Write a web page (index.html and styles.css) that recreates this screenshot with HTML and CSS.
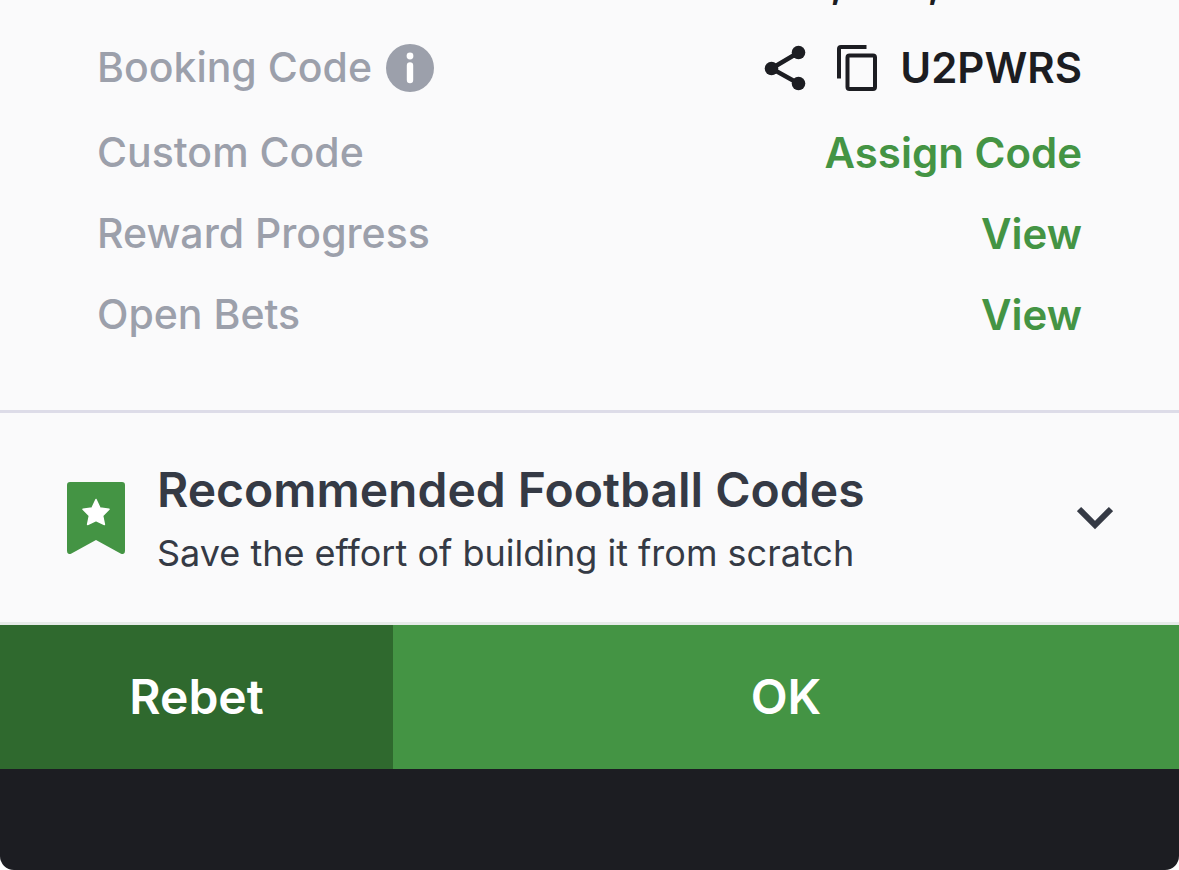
FILE: index.html
```html
<!DOCTYPE html>
<html lang="en">
<head>
    <meta charset="UTF-8">
    <meta name="viewport" content="width=device-width, initial-scale=1.0">
    <title>Booking Code</title>
    <link rel="stylesheet" href="styles.css">
</head>
<body>
    <div class="sheet">
        <main class="content">
            <div class="amount"><span>,</span><span>,</span></div>
            <dl class="details">
                <div class="row booking">
                    <dt>
                        Booking Code
                        <button class="icon-button" type="button" aria-label="About booking codes">
                            <svg width="48" height="48" viewBox="0 0 48 48">
                                <circle cx="24" cy="24" r="24" fill="#9ca0ab"/>
                                <circle cx="24" cy="12" r="3.4" fill="#fff"/>
                                <path d="M24 21.5V36" stroke="#fff" stroke-width="6.4" stroke-linecap="round"/>
                            </svg>
                        </button>
                    </dt>
                    <dd>
                        <button class="icon-button" type="button" aria-label="Share">
                            <svg width="42" height="48" viewBox="0 0 42 48" fill="#1c1d22">
                                <path d="M34.5 8.5 7.5 24.5 34.5 39.5" fill="none" stroke="#1c1d22" stroke-width="4.5"/>
                                <circle cx="34.5" cy="8.5" r="6.8"/>
                                <circle cx="7.5" cy="24.5" r="6.8"/>
                                <circle cx="34.5" cy="39.5" r="6.8"/>
                            </svg>
                        </button>
                        <button class="icon-button copy" type="button" aria-label="Copy code">
                            <svg width="42" height="48" viewBox="0 0 42 48" fill="none" stroke="#1c1d22" stroke-width="4">
                                <path d="M3 34.5V5a2 2 0 0 1 2-2H30.5"/>
                                <rect x="11.5" y="11.5" width="27.5" height="33.5" rx="2"/>
                            </svg>
                        </button>
                        <span>U2PWRS</span>
                    </dd>
                </div>
                <div class="row">
                    <dt>Custom Code</dt>
                    <dd><a href="#">Assign Code</a></dd>
                </div>
                <div class="row">
                    <dt>Reward Progress</dt>
                    <dd><a href="#">View</a></dd>
                </div>
                <div class="row">
                    <dt>Open Bets</dt>
                    <dd><a href="#">View</a></dd>
                </div>
            </dl>

            <button class="recommended" type="button" aria-expanded="false">
                <svg class="bookmark" width="58" height="72" viewBox="0 0 58 72">
                    <path d="M3 0H55a3 3 0 0 1 3 3V69q0 4-4 2.7L29 58 4 71.7Q0 73 0 69V3a3 3 0 0 1 3-3Z" fill="#449444"/>
                    <path d="M29 17.5 33 26 42 27.3 35.6 33.7 37.4 42.5 29 38.5 20.6 42.5 22.4 33.7 16 27.3 25 26Z" fill="#fff" stroke="#fff" stroke-width="1.5" stroke-linejoin="round"/>
                </svg>
                <span class="recommended-text">
                    <span class="title">Recommended Football Codes</span>
                    <span class="subtitle">Save the effort of building it from scratch</span>
                </span>
                <svg class="chevron" width="36" height="24" viewBox="0 0 36 24">
                    <path d="M2 3 18 19 34 3" fill="none" stroke="#353a45" stroke-width="6"/>
                </svg>
            </button>
        </main>

        <div class="actions">
            <button class="rebet" type="button">Rebet</button>
            <button class="ok" type="button">OK</button>
        </div>
    </div>
</body>
</html>
```
FILE: styles.css
```css
* {
    margin: 0;
    padding: 0;
    box-sizing: border-box;
}

body {
    background-color: #fff;
    font-family: Inter, 'Liberation Sans', sans-serif;
}

button {
    border: none;
    background: none;
    color: inherit;
    font-family: inherit;
    cursor: pointer;
}

svg {
    display: block;
    flex-shrink: 0;
}

.sheet {
    display: flex;
    flex-direction: column;
    min-height: 100vh;
    background-color: #1c1d22;
    border-radius: 0 0 14px 14px;
    overflow: hidden;
}

.content {
    background-color: #fafafb;
}

/* tail of the amount that is scrolled under the top edge */
.amount {
    display: flex;
    align-items: flex-end;
    justify-content: flex-end;
    gap: 84px;
    height: 6px;
    padding-right: 238px;
    overflow: hidden;
    color: #1c1d22;
    font-size: 42px;
    font-weight: 600;
    line-height: 48px;
}

.details {
    display: flex;
    flex-direction: column;
    gap: 30px;
    padding: 32px 97px 70px;
    border-bottom: 3px solid #dddce8;
    font-size: 41px;
    line-height: 51px;
}

.row {
    display: flex;
    justify-content: space-between;
}

.booking {
    padding-bottom: 4px;
    padding-top: 4px;
}

dt,
dd {
    display: flex;
    align-items: center;
}

dt {
    gap: 14px;
    color: #9ca0ab;
    font-weight: 500;
}

dd {
    color: #1c1d22;
    font-size: 42px;
    font-weight: 600;
}

.copy {
    margin: 0 22px 0 30px;
}

a {
    color: #449444;
    text-decoration: none;
}

.recommended {
    display: flex;
    align-items: center;
    width: 100%;
    padding: 44px 66px 43px 67px;
    border-bottom: 3px solid #e6ebe8;
    color: #353a45;
    text-align: left;
}

.recommended-text {
    display: flex;
    flex: 1;
    flex-direction: column;
    gap: 6px;
    margin-left: 32px;
    padding-bottom: 2px;
}

.title {
    font-size: 48px;
    font-weight: 600;
    line-height: 66px;
}

.subtitle {
    font-size: 36px;
    line-height: 48px;
}

.actions {
    display: grid;
    grid-template-columns: 1fr 2fr;
    color: #fff;
}

.actions button {
    height: 144px;
    padding-bottom: 2px;
    font-size: 48px;
    font-weight: 600;
}

.actions .rebet {
    background-color: #2f692e;
}

.actions .ok {
    background-color: #449444;
}
```
